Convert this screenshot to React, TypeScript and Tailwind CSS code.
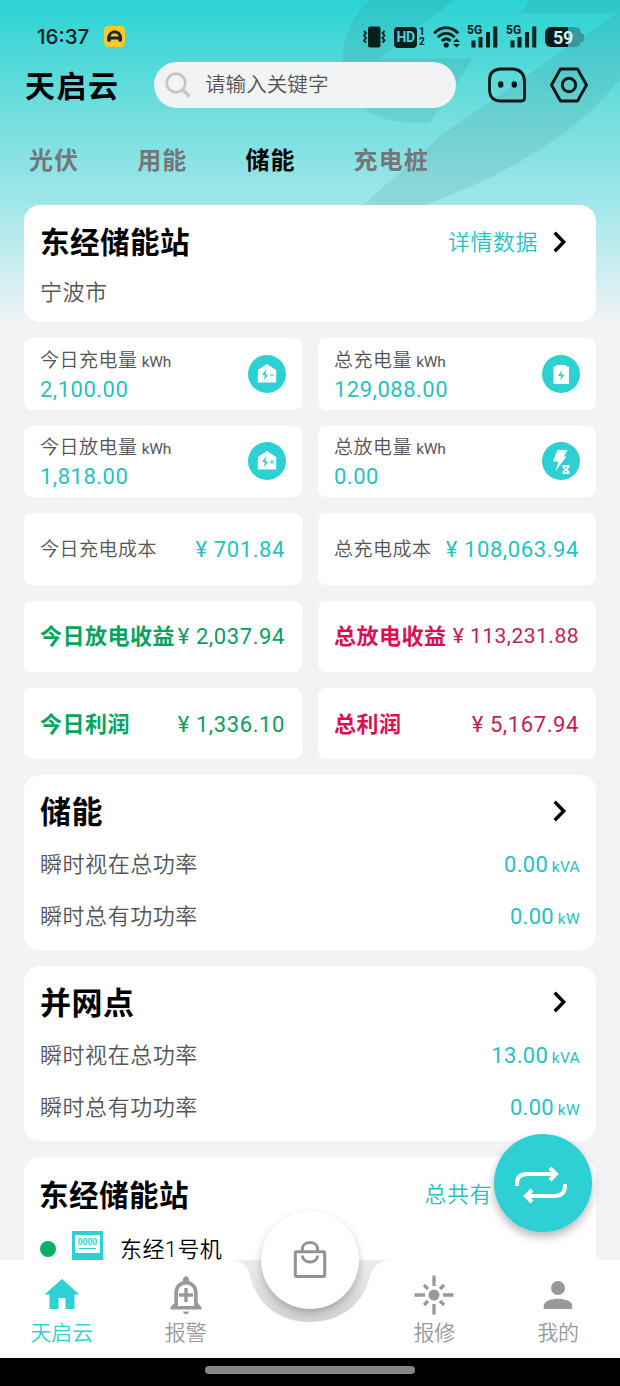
import type { ReactNode } from "react";

const tabs = ["光伏", "用能", "储能", "充电桩"];

const energyCards = [
  { label: "今日充电量", value: "2,100.00", icon: <HouseIcon sign="minus" /> },
  { label: "总充电量", value: "129,088.00", icon: <BatteryIcon /> },
  { label: "今日放电量", value: "1,818.00", icon: <HouseIcon sign="plus" /> },
  { label: "总放电量", value: "0.00", icon: <BoltIcon /> },
];

const costLabel = "pt-[3px] text-[19px] leading-6 tracking-[0.5px] font-[350] text-[#555]";
const todayLabel = "pt-px text-[22px] tracking-[0.5px] font-bold text-[#07a45f]";
const totalLabel = "pt-px text-[22px] tracking-[0.5px] font-bold text-[#dc0f55]";

const moneyCards = [
  { label: "今日充电成本", value: "701.84", labelClass: costLabel, valueClass: "text-[22px] tracking-[0.6px] text-[#25c2c4]" },
  { label: "总充电成本", value: "108,063.94", labelClass: costLabel, valueClass: "text-[22px] tracking-[0.6px] text-[#25c2c4]" },
  { label: "今日放电收益", value: "2,037.94", labelClass: todayLabel, valueClass: "text-[22px] tracking-[0.6px] text-[#07a060]" },
  { label: "总放电收益", value: "113,231.88", labelClass: totalLabel, valueClass: "text-[21px] tracking-[0.5px] text-[#c51a58]" },
  { label: "今日利润", value: "1,336.10", labelClass: todayLabel, valueClass: "text-[22px] tracking-[0.6px] text-[#07a060]" },
  { label: "总利润", value: "5,167.94", labelClass: totalLabel, valueClass: "text-[22px] tracking-[0.6px] text-[#c51a58]" },
];

const powerCards = [
  { title: "储能", apparent: "0.00", active: "0.00" },
  { title: "并网点", apparent: "13.00", active: "0.00" },
];

function HouseIcon({ sign }: { sign: "plus" | "minus" }) {
  return (
    <svg className="h-[38px] w-[38px]" viewBox="0 0 38 38">
      <circle cx="19" cy="19" r="19" fill="#2dd0d3" />
      <path d="M19 9L28.2 15V27.5H9.8V15Z" fill="#fff" />
      <path d="M18.5 14.5L14 19.5L17 20.5L15.5 25L20 20.5L17.5 19Z" fill="#2dd0d3" />
      <path d={sign === "plus" ? "M21.8 20H26.2M24 17.8V22.2" : "M22 20H26"} stroke="#2dd0d3" strokeWidth="1.1" />
    </svg>
  );
}

function BatteryIcon() {
  return (
    <svg className="h-[38px] w-[38px]" viewBox="0 0 38 38">
      <circle cx="19" cy="19" r="19" fill="#2dd0d3" />
      <path d="M11.5 11.5H14V10H24V11.5H27V29H11.5Z" fill="#fff" />
      <path d="M20 15L16 21H19L18.5 25.5L22.5 19.5H19.2Z" fill="#2dd0d3" />
    </svg>
  );
}

function BoltIcon() {
  return (
    <svg className="h-[38px] w-[38px]" viewBox="0 0 38 38">
      <circle cx="19" cy="19" r="19" fill="#2dd0d3" />
      <path d="M15.5 8L25.5 8L21.8 14.5H24.5L13.5 29L16.4 19.5H11Z" fill="#fff" />
      <path d="M20.5 23H27.5V25.5L25.2 27.5L27.5 29.5V32H20.5V29.5L22.7 27.5L20.5 25.5Z" fill="#fff" />
      <path d="M22.2 25H25.8L24 26.4ZM22.5 30.3L24 28.8L25.5 30.3Z" fill="#2dd0d3" />
    </svg>
  );
}

function Chevron() {
  return (
    <svg className="h-6 w-4" viewBox="0 0 16 24" fill="none">
      <path d="M1.7 2.8L10.7 12L1.7 21.2" stroke="#000" strokeWidth="3.4" />
    </svg>
  );
}

function Signal() {
  return (
    <div className="relative h-6 w-[31px]">
      <span className="absolute -top-px left-0 text-[12px] leading-3 font-bold">5G</span>
      <svg className="h-6 w-[31px]" viewBox="0 0 31 24">
        <path d="M4.5 15.5H8.5V22.5H4.5ZM11.5 12H15.5V22.5H11.5ZM19 7H23V22.5H19ZM26.3 1.5H30.3V22.5H26.3Z" fill="#06201f" />
      </svg>
    </div>
  );
}

function StatusBar() {
  return (
    <div className="flex h-[60px] items-center pt-[14px] pr-9 pl-[37px] text-[#06201f]">
      <span className="w-[67px] font-[Inter] text-[20.5px] font-medium">16:37</span>
      <svg className="h-[22px] w-[22px]" viewBox="0 0 22 22">
        <rect width="21" height="21" rx="4.5" fill="#ffc928" />
        <path d="M3.6 15.8C2.4 12.5 3.2 8.6 6 6.2C8.8 3.8 13 3.9 15.6 6.3C18.2 8.7 18.7 12.8 17.5 15.8L14.5 15.6V13.4H6.8V15.6Z" fill="#19262f" />
        <path d="M6.4 10.5C7.3 6.3 13.8 6.2 14.8 10.5Z" fill="#ffc928" />
      </svg>
      <div className="ml-auto flex items-center">
        <svg className="h-6 w-6" viewBox="0 0 24 24">
          <rect x="6" y="1.5" width="12.5" height="21" rx="2" fill="#06201f" />
          <path d="M2 6L4 8L2 10.5L4 13L2 15.5L4 17.5M22.5 6L20.5 8L22.5 10.5L20.5 13L22.5 15.5L20.5 17.5" stroke="#06201f" strokeWidth="1.8" fill="none" />
        </svg>
        <span className="ml-[8px] flex h-[21px] w-[23px] items-center justify-center rounded-[4px] bg-[#06201f] text-[14px] font-bold tracking-[-0.5px] text-[#4bd6d7]">HD</span>
        <span className="ml-0.5 flex w-[9px] flex-col text-[10px] leading-[10px] font-bold">
          <span>1</span>
          <span>2</span>
        </span>
        <svg className="ml-[5px] h-6 w-[28px]" viewBox="0 0 28 24" fill="none">
          <path d="M1 8.3C8 .8 18.5 .8 25.2 8.3M4.8 12.3C10 7 16.5 7 21.6 12.3M8.8 16C11.7 13.2 14.7 13.2 17.6 16" stroke="#06201f" strokeWidth="2.9" />
          <circle cx="13.2" cy="20" r="2.6" fill="#06201f" />
          <path d="M23.5 13.5L27 17H20ZM20 19H27L23.5 22.5Z" fill="#06201f" />
        </svg>
        <div className="ml-[6px] flex gap-[8px]">
          <Signal />
          <Signal />
        </div>
        <div className="ml-[8px] flex items-center">
          <div className="flex h-[20px] w-[36px] items-center justify-center rounded-[6px] bg-linear-to-r from-[#061c1c] from-65% to-[#36999d] to-65% text-[18px] font-bold tracking-[-0.3px] text-[#c9f2f2]">59</div>
          <div className="h-[9px] w-[3px] rounded-r-full bg-[#36999d]" />
        </div>
      </div>
    </div>
  );
}

function Header() {
  return (
    <header className="flex h-[50px] items-center pl-[25px] text-black">
      <h1 className="w-[129px] pt-[3px] text-[30px] font-bold tracking-[1.5px]">天启云</h1>
      <div className="flex h-[46px] w-[302px] items-center rounded-full bg-[#f2f3f5] pl-[11px]">
        <svg className="h-[26px] w-[26px]" viewBox="0 0 26 26" fill="none" stroke="#c5c6c7">
          <circle cx="11" cy="11" r="9.3" strokeWidth="2.7" />
          <path d="M17.8 17.8L24.4 24.5" strokeWidth="3.3" />
        </svg>
        <span className="ml-[14px] text-[20.6px] font-[350] text-[#555]">请输入关键字</span>
      </div>
      <svg className="ml-8 h-9 w-[38px]" viewBox="0 0 38 36" fill="none">
        <path d="M12 2H25Q36.5 3 36.5 15V31Q36.5 34 33.5 34H13Q1.5 34 1.5 22V13Q1.5 3 12 2Z" stroke="#071515" strokeWidth="2.8" />
        <ellipse cx="12.7" cy="17.5" rx="2.7" ry="3.2" fill="#071515" />
        <ellipse cx="26.3" cy="17.5" rx="2.7" ry="3.2" fill="#071515" />
      </svg>
      <svg className="ml-6 h-9 w-[38px]" viewBox="0 0 38 36" fill="none" stroke="#071515" strokeWidth="2.9" strokeLinejoin="round">
        <path d="M10.5 2H27.5L36.5 18L27.5 34H10.5L1.5 18Z" />
        <circle cx="19" cy="18" r="6.7" />
      </svg>
    </header>
  );
}

function PowerRow({ label, value, unit }: { label: string; value: string; unit: string }) {
  return (
    <div className="flex h-[52px] items-center justify-between">
      <span className="pt-[2px] text-[22px] font-[350] tracking-[0.55px] text-[#555]">{label}</span>
      <span className="pt-[2px] text-[22px] tracking-[0.3px] text-[#25c2c4]">
        {value} <span className="-ml-0.5 text-[15.5px]">{unit}</span>
      </span>
    </div>
  );
}

function NavItem({ label, active, children }: { label: string; active?: boolean; children: ReactNode }) {
  return (
    <div className={`flex w-[124px] flex-col items-center pt-[15px] ${active ? "text-[#2dd0d3]" : "text-[#999]"}`}>
      <svg className="h-10 w-10" viewBox="0 0 40 40" fill="currentColor">
        {children}
      </svg>
      <span className="mt-[3px] text-[21px] leading-[30px] font-[350]">{label}</span>
    </div>
  );
}

function BottomNav() {
  return (
    <nav className="absolute inset-x-0 bottom-0">
      {/* bar outline with the notch around the centre button */}
      <svg className="absolute inset-x-0 bottom-7 h-[98px] w-[620px]" viewBox="0 0 620 98">
        <defs>
          <linearGradient id="notch" x1="0" y1="0" x2="0" y2="1">
            <stop offset="0" stopColor="#ededee" />
            <stop offset="1" stopColor="#d1d1d3" />
          </linearGradient>
        </defs>
        <path d="M225 0H395L375 20Q362 65 310 65Q258 65 245 20Z" fill="url(#notch)" />
        <path d="M0 0H230C242 0 247 5 250 16C257 45 280 62 310 62C340 62 363 45 370 16C373 5 381 0 393 0H620V98H0Z" fill="#fff" />
      </svg>
      <div className="relative flex h-[98px]">
        <NavItem label="天启云" active>
          <path d="M20 4L37.5 19.5H32.5V34H23.5V23H16.5V34H7.5V19.5H2.5Z" />
        </NavItem>
        <NavItem label="报警">
          <path d="M17 3.5Q20 -1 23 3.5V6C28.5 8 31.7 12 31.7 18V28L35.5 32V34.5H4.5V32L8.3 28V18C8.3 12 11.5 8 17 6ZM12 31H28V18C28 6.5 12 6.5 12 18ZM16.5 36.5H23.5Q20 42 16.5 36.5Z" fillRule="evenodd" />
          <path d="M18.3 13H21.7V18.3H27V21.7H21.7V27H18.3V21.7H13V18.3H18.3Z" />
        </NavItem>
        <div className="-mt-[49px] mr-[14px] ml-[13px] flex h-[98px] w-[98px] shrink-0 items-center justify-center rounded-full bg-white shadow-[0_4px_8px_rgba(0,0,0,0.24)]">
          <svg className="h-10 w-10" viewBox="0 0 40 40" fill="none" stroke="#929292" strokeWidth="3">
            <rect x="5.3" y="11.7" width="29.4" height="24.7" rx="1.5" />
            <path d="M12.3 11V9.5C12.3 .3 27.7 .3 27.7 9.5V11M12.3 15.5C13 24 27 24 27.7 15.5" />
          </svg>
        </div>
        <NavItem label="报修">
          <circle cx="20" cy="20" r="5.5" />
          <path d="M20 .5V11M20 29V39.5M.5 20H11M29 20H39.5M10 10L14 14M30 10L26 14M10 30L14 26M30 30L26 26" stroke="currentColor" strokeWidth="3.3" fill="none" />
        </NavItem>
        <NavItem label="我的">
          <circle cx="20" cy="13" r="7" />
          <path d="M5.7 34V30C8 21.5 32 21.5 34.3 30V34Z" />
        </NavItem>
      </div>
      <div className="relative flex h-7 justify-center bg-black pt-[8px]">
        <div className="h-2 w-[210px] rounded-full bg-[#858585]" />
      </div>
    </nav>
  );
}

export default function App() {
  return (
    <div className="relative h-[1386px] w-[620px] overflow-hidden bg-[#f2f3f5] font-[Roboto,'Noto_Sans_CJK_SC',sans-serif]">
      <svg className="absolute inset-x-0 top-0 h-[325px] w-[620px]" viewBox="0 0 620 325">
        <defs>
          <linearGradient id="sky" x1="0" y1="0" x2="0" y2="1">
            <stop offset="0" stopColor="#2bd3d4" />
            <stop offset="0.3" stopColor="#68dcdc" />
            <stop offset="0.63" stopColor="#a2e7e9" />
            <stop offset="1" stopColor="#f2f3f5" />
          </linearGradient>
        </defs>
        <path d="M0 0H620V325H0Z" fill="url(#sky)" />
        <g fill="#316d70" fillOpacity="0.12">
          <path d="M369 0C350 20 343 38 343 60C345 106 373 125 430 123L473 58H380L454 0Z" />
          <path d="M530 0L521 13H617L443 134L363 205H425C508 175 583 130 620 78V0Z" />
        </g>
      </svg>
      <div className="relative">
        <StatusBar />
        <Header />
        <div className="flex h-[95px] gap-[58px] pt-[33px] pl-[29px]">
          {tabs.map((tab) => (
            <span key={tab} className={`text-[24px] leading-9 font-bold tracking-[1.1px] ${tab === "储能" ? "text-black" : "text-[#747679]"}`}>
              {tab}
            </span>
          ))}
        </div>
        <main className="flex flex-col gap-4 px-6">
          <section className="h-[117.4px] rounded-2xl bg-white px-4 pt-[15px]">
            <div className="flex h-[44px] items-center">
              <h2 className="pt-[3px] text-[29.5px] font-bold tracking-[0.5px] text-black">东经储能站</h2>
              <span className="mr-[15px] ml-auto text-[22px] font-[350] tracking-[0.5px] text-[#25c2c4]">详情数据</span>
              <Chevron />
              <span className="w-[11px]" />
            </div>
            <p className="mt-[13px] text-[22px] leading-[32px] font-[350] tracking-[0.5px] text-[#555]">宁波市</p>
          </section>

          <div className="grid grid-cols-2 gap-4">
            {energyCards.map((card) => (
              <div key={card.label} className="flex h-[71.4px] items-center justify-between rounded-lg bg-white px-4">
                <div className="pt-[2px]">
                  <p className="text-[19px] leading-[27px] font-[350] tracking-[0.5px] text-[#555]">
                    {card.label} <span className="-ml-px text-[15.5px] font-normal tracking-[-0.2px]">kWh</span>
                  </p>
                  <p className="text-[22px] leading-[27px] tracking-[0.5px] text-[#25c2c4]">{card.value}</p>
                </div>
                {card.icon}
              </div>
            ))}
            {moneyCards.map((card) => (
              <div key={card.label} className="flex h-[71.4px] items-center justify-between rounded-lg bg-white pr-[17px] pl-4 whitespace-nowrap">
                <span className={card.labelClass}>{card.label}</span>
                <span className={`pt-px ${card.valueClass}`}>¥ {card.value}</span>
              </div>
            ))}
          </div>

          {powerCards.map((card) => (
            <section key={card.title} className="h-[175px] rounded-2xl bg-white px-4 pt-[14px]">
              <div className="flex h-[44px] items-center justify-between pr-[11px]">
                <h2 className="pt-[3px] text-[31px] font-bold tracking-[0.5px] text-black">{card.title}</h2>
                <Chevron />
              </div>
              <div className="pt-[4px]">
                <PowerRow label="瞬时视在总功率" value={card.apparent} unit="kVA" />
                <PowerRow label="瞬时总有功功率" value={card.active} unit="kW" />
              </div>
            </section>
          ))}

          <section className="h-[175px] rounded-2xl bg-white px-4 pt-[15px]">
            <div className="flex h-[44px] items-center justify-between pr-[88px]">
              <h2 className="-ml-px pt-[4px] text-[29.5px] font-bold tracking-[0.5px] text-black">东经储能站</h2>
              <span className="text-[22px] font-[350] tracking-[0.5px] text-[#25c2c4]">总共有</span>
            </div>
            <div className="mt-[12px] flex h-[34px] items-center">
              <span className="mt-[7px] h-4 w-4 rounded-full bg-[#09b068]" />
              <div className="ml-4 flex h-[29px] w-[31px] flex-col items-center bg-[#2dd0d3] pt-[4px]">
                <div className="flex h-[18px] w-[25px] flex-col items-center bg-white pt-[3px] text-[#2dd0d3]">
                  <span className="text-[8.5px] leading-[9px] font-bold">0000</span>
                  <span className="mt-px h-px w-[17px] shrink-0 bg-[#2dd0d3]" />
                </div>
              </div>
              <span className="mt-[9px] ml-[17px] text-[22px] font-[350] tracking-[0.4px] text-black">东经1号机</span>
            </div>
          </section>
        </main>
      </div>
      <button className="absolute top-[1134px] left-[494px] flex h-[98px] w-[98px] items-center justify-center rounded-full bg-[#2dd0d3] shadow-[0_5px_10px_rgba(0,0,0,0.28)]">
        <svg className="mt-1 mr-1 h-[38px] w-[52px]" viewBox="0 0 52 38" fill="none" stroke="#fff" strokeWidth="4">
          <path d="M2 20V17C2 10.5 6 8 13 8H41M50 18V20C50 27 46 30 39 30H12M35 2L41 8L35 14M17 24L11 30L17 36" />
        </svg>
      </button>
      <BottomNav />
    </div>
  );
}
